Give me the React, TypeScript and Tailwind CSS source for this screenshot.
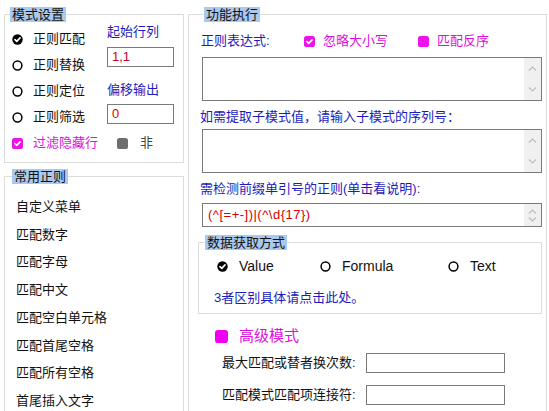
import type { ReactNode } from 'react';

const blue = 'text-[#1c1cbc]';
const magenta = 'text-[#dd11dd]';

function RadioOn() {
  return (
    <svg width="11" height="11" viewBox="0 0 11 11" className="shrink-0">
      <circle cx="5.5" cy="5.5" r="5.2" fill="#000" />
      <path d="M3 5.6 L4.8 7.3 L8 3.9" fill="none" stroke="#fff" strokeWidth="1.7" strokeLinecap="round" strokeLinejoin="round" />
    </svg>
  );
}

function RadioOff() {
  return (
    <svg width="11" height="11" viewBox="0 0 11 11" className="shrink-0">
      <circle cx="5.5" cy="5.5" r="4.4" fill="#fff" stroke="#000" strokeWidth="1.5" />
    </svg>
  );
}

function Box({ color, checked, size = 11 }: { color: string; checked?: boolean; size?: number }) {
  return (
    <svg width={size} height={size} viewBox="0 0 11 11" className="shrink-0">
      <rect x="0" y="0" width="11" height="11" rx="2.6" fill={color} />
      {checked && (
        <path d="M2.9 5.7 L4.7 7.4 L8.1 3.8" fill="none" stroke="#fff" strokeWidth="1.7" strokeLinecap="round" strokeLinejoin="round" />
      )}
    </svg>
  );
}

function Chevron({ up }: { up?: boolean }) {
  return (
    <svg width="9" height="5" viewBox="0 0 9 5">
      <path d={up ? 'M1 4.5 L4.5 1 L8 4.5' : 'M1 0.5 L4.5 4 L8 0.5'} fill="none" stroke="#bdbdbd" strokeWidth="1.2" />
    </svg>
  );
}

function TextBox({ height, children, spin }: { height: string; children?: ReactNode; spin?: boolean }) {
  return (
    <div className={`ml-[4px] ${height} flex border border-[#7a7a7a] bg-white`}>
      <div className="flex flex-1 items-center pl-[5px] text-[13px] tracking-[0.5px] text-[#d40000]">{children}</div>
      <div
        className={`w-[17px] bg-[#f0f0f0] flex flex-col items-center ${
          spin ? 'justify-center gap-[3px]' : 'justify-between py-[8px]'
        }`}
      >
        <Chevron up />
        <Chevron />
      </div>
    </div>
  );
}

function Legend({ children, className = '' }: { children: ReactNode; className?: string }) {
  return (
    <legend className={`h-[15px] px-[2px] bg-[#a9c9ee] text-[13px] leading-[15px] text-[#111] ${className}`}>
      {children}
    </legend>
  );
}

const modes = ['正则匹配', '正则替换', '正则定位', '正则筛选'];
const presets = ['自定义菜单', '匹配数字', '匹配字母', '匹配中文', '匹配空白单元格', '匹配首尾空格', '匹配所有空格', '首尾插入文字'];

export default function App() {
  return (
    <div className="w-[549px] h-[411px] overflow-hidden bg-white flex items-start gap-[4px] pl-[4px] pt-[7px] font-['Liberation_Sans','Noto_Sans_CJK_SC',sans-serif] text-[13px] text-[#111]">
      {/* left column */}
      <div className="w-[180px] shrink-0 flex flex-col">
        <fieldset className="border border-[#dcdcdc] pt-[2px] pb-[6px]">
          <Legend className="ml-[5px]">模式设置</Legend>
          <div className="flex">
            <div className="w-[102px] pt-[2px] pl-[7px]">
              {modes.map((m, i) => (
                <div key={m} className="h-[26px] flex items-center gap-[10px]">
                  {i === 0 ? <RadioOn /> : <RadioOff />}
                  <span>{m}</span>
                </div>
              ))}
            </div>
            <div className="flex flex-col w-[67px]">
              <div className={`h-[15px] leading-[15px] ${blue}`}>起始行列</div>
              <div className="mt-[8px] h-[20px] border border-[#7a7a7a] pl-[4px] flex items-center text-[#c8002a]">1,1</div>
              <div className={`mt-[15px] h-[15px] leading-[15px] ${blue}`}>偏移输出</div>
              <div className="mt-[7px] h-[20px] border border-[#7a7a7a] pl-[4px] flex items-center text-[#e00000]">0</div>
            </div>
          </div>
          <div className="h-[26px] flex items-center pl-[7px]">
            <Box color="#ee11ee" checked />
            <span className={`ml-[10px] ${magenta}`}>过滤隐藏行</span>
            <span className="ml-[19px]">
              <Box color="#6e6e6e" />
            </span>
            <span className="ml-[12px] text-[#444]">非</span>
          </div>
        </fieldset>

        <fieldset className="mt-[6px] border border-[#dcdcdc] pt-[9px] pb-[20px]">
          <Legend className="ml-[7px]">常用正则</Legend>
          {presets.map((p) => (
            <div key={p} className="h-[27.7px] flex items-center pl-[11px]">
              {p}
            </div>
          ))}
        </fieldset>
      </div>

      {/* right column */}
      <fieldset className="w-[359px] shrink-0 border border-[#dcdcdc] pl-[9px] pr-[4px] pb-[20px]">
        <Legend className="ml-[6px]">功能执行</Legend>

        <div className="mt-[9px] h-[20px] flex items-center ml-[3px]">
          <span className={`w-[103px] ${blue}`}>正则表达式:</span>
          <div className="w-[114px] flex items-center gap-[8px]">
            <Box color="#ee11ee" checked />
            <span className={magenta}>忽略大小写</span>
          </div>
          <div className="flex items-center gap-[8px]">
            <Box color="#ee11ee" />
            <span className={magenta}>匹配反序</span>
          </div>
        </div>

        <div className="mt-[6px]">
          <TextBox height="h-[44px]" />
        </div>

        <div className={`mt-[6px] h-[20px] flex items-center ml-[2px] ${blue}`}>如需提取子模式值，请输入子模式的序列号：</div>

        <div className="mt-[2px]">
          <TextBox height="h-[44px]" />
        </div>

        <div className={`mt-[6px] h-[20px] flex items-center ml-[2px] ${blue}`}>需检测前缀单引号的正则(单击看说明):</div>

        <div className="mt-[4px]">
          <TextBox height="h-[24px]" spin>
            (^[=+-])|(^\d{'{17}'})
          </TextBox>
        </div>

        <fieldset className="mt-[8px] border border-[#dcdcdc] pt-[6px] pb-[5px]">
          <Legend className="ml-[6px]">数据获取方式</Legend>
          <div className="h-[20px] flex items-center pl-[18px] text-[14px]">
            <div className="w-[103px] flex items-center gap-[11px]">
              <RadioOn />
              <span>Value</span>
            </div>
            <div className="w-[128px] flex items-center gap-[11px]">
              <RadioOff />
              <span>Formula</span>
            </div>
            <div className="flex items-center gap-[11px]">
              <RadioOff />
              <span>Text</span>
            </div>
          </div>
          <div className={`mt-[12px] h-[20px] flex items-center pl-[15px] ${blue}`}>3者区别具体请点击此处。</div>
        </fieldset>

        <div className="mt-[12px] h-[20px] flex items-center ml-[17px]">
          <Box color="#f000f0" size={13} />
          <span className={`ml-[11px] text-[15px] ${magenta}`}>高级模式</span>
        </div>

        <div className="mt-[7px] h-[20px] flex items-center ml-[24px]">
          <span className="w-[144px]">最大匹配或替者换次数:</span>
          <div className="w-[139px] h-[20px] border border-[#7a7a7a]" />
        </div>

        <div className="mt-[12px] h-[20px] flex items-center ml-[24px]">
          <span className="w-[144px]">匹配模式匹配项连接符:</span>
          <div className="w-[139px] h-[20px] border border-[#7a7a7a]" />
        </div>
      </fieldset>
    </div>
  );
}
